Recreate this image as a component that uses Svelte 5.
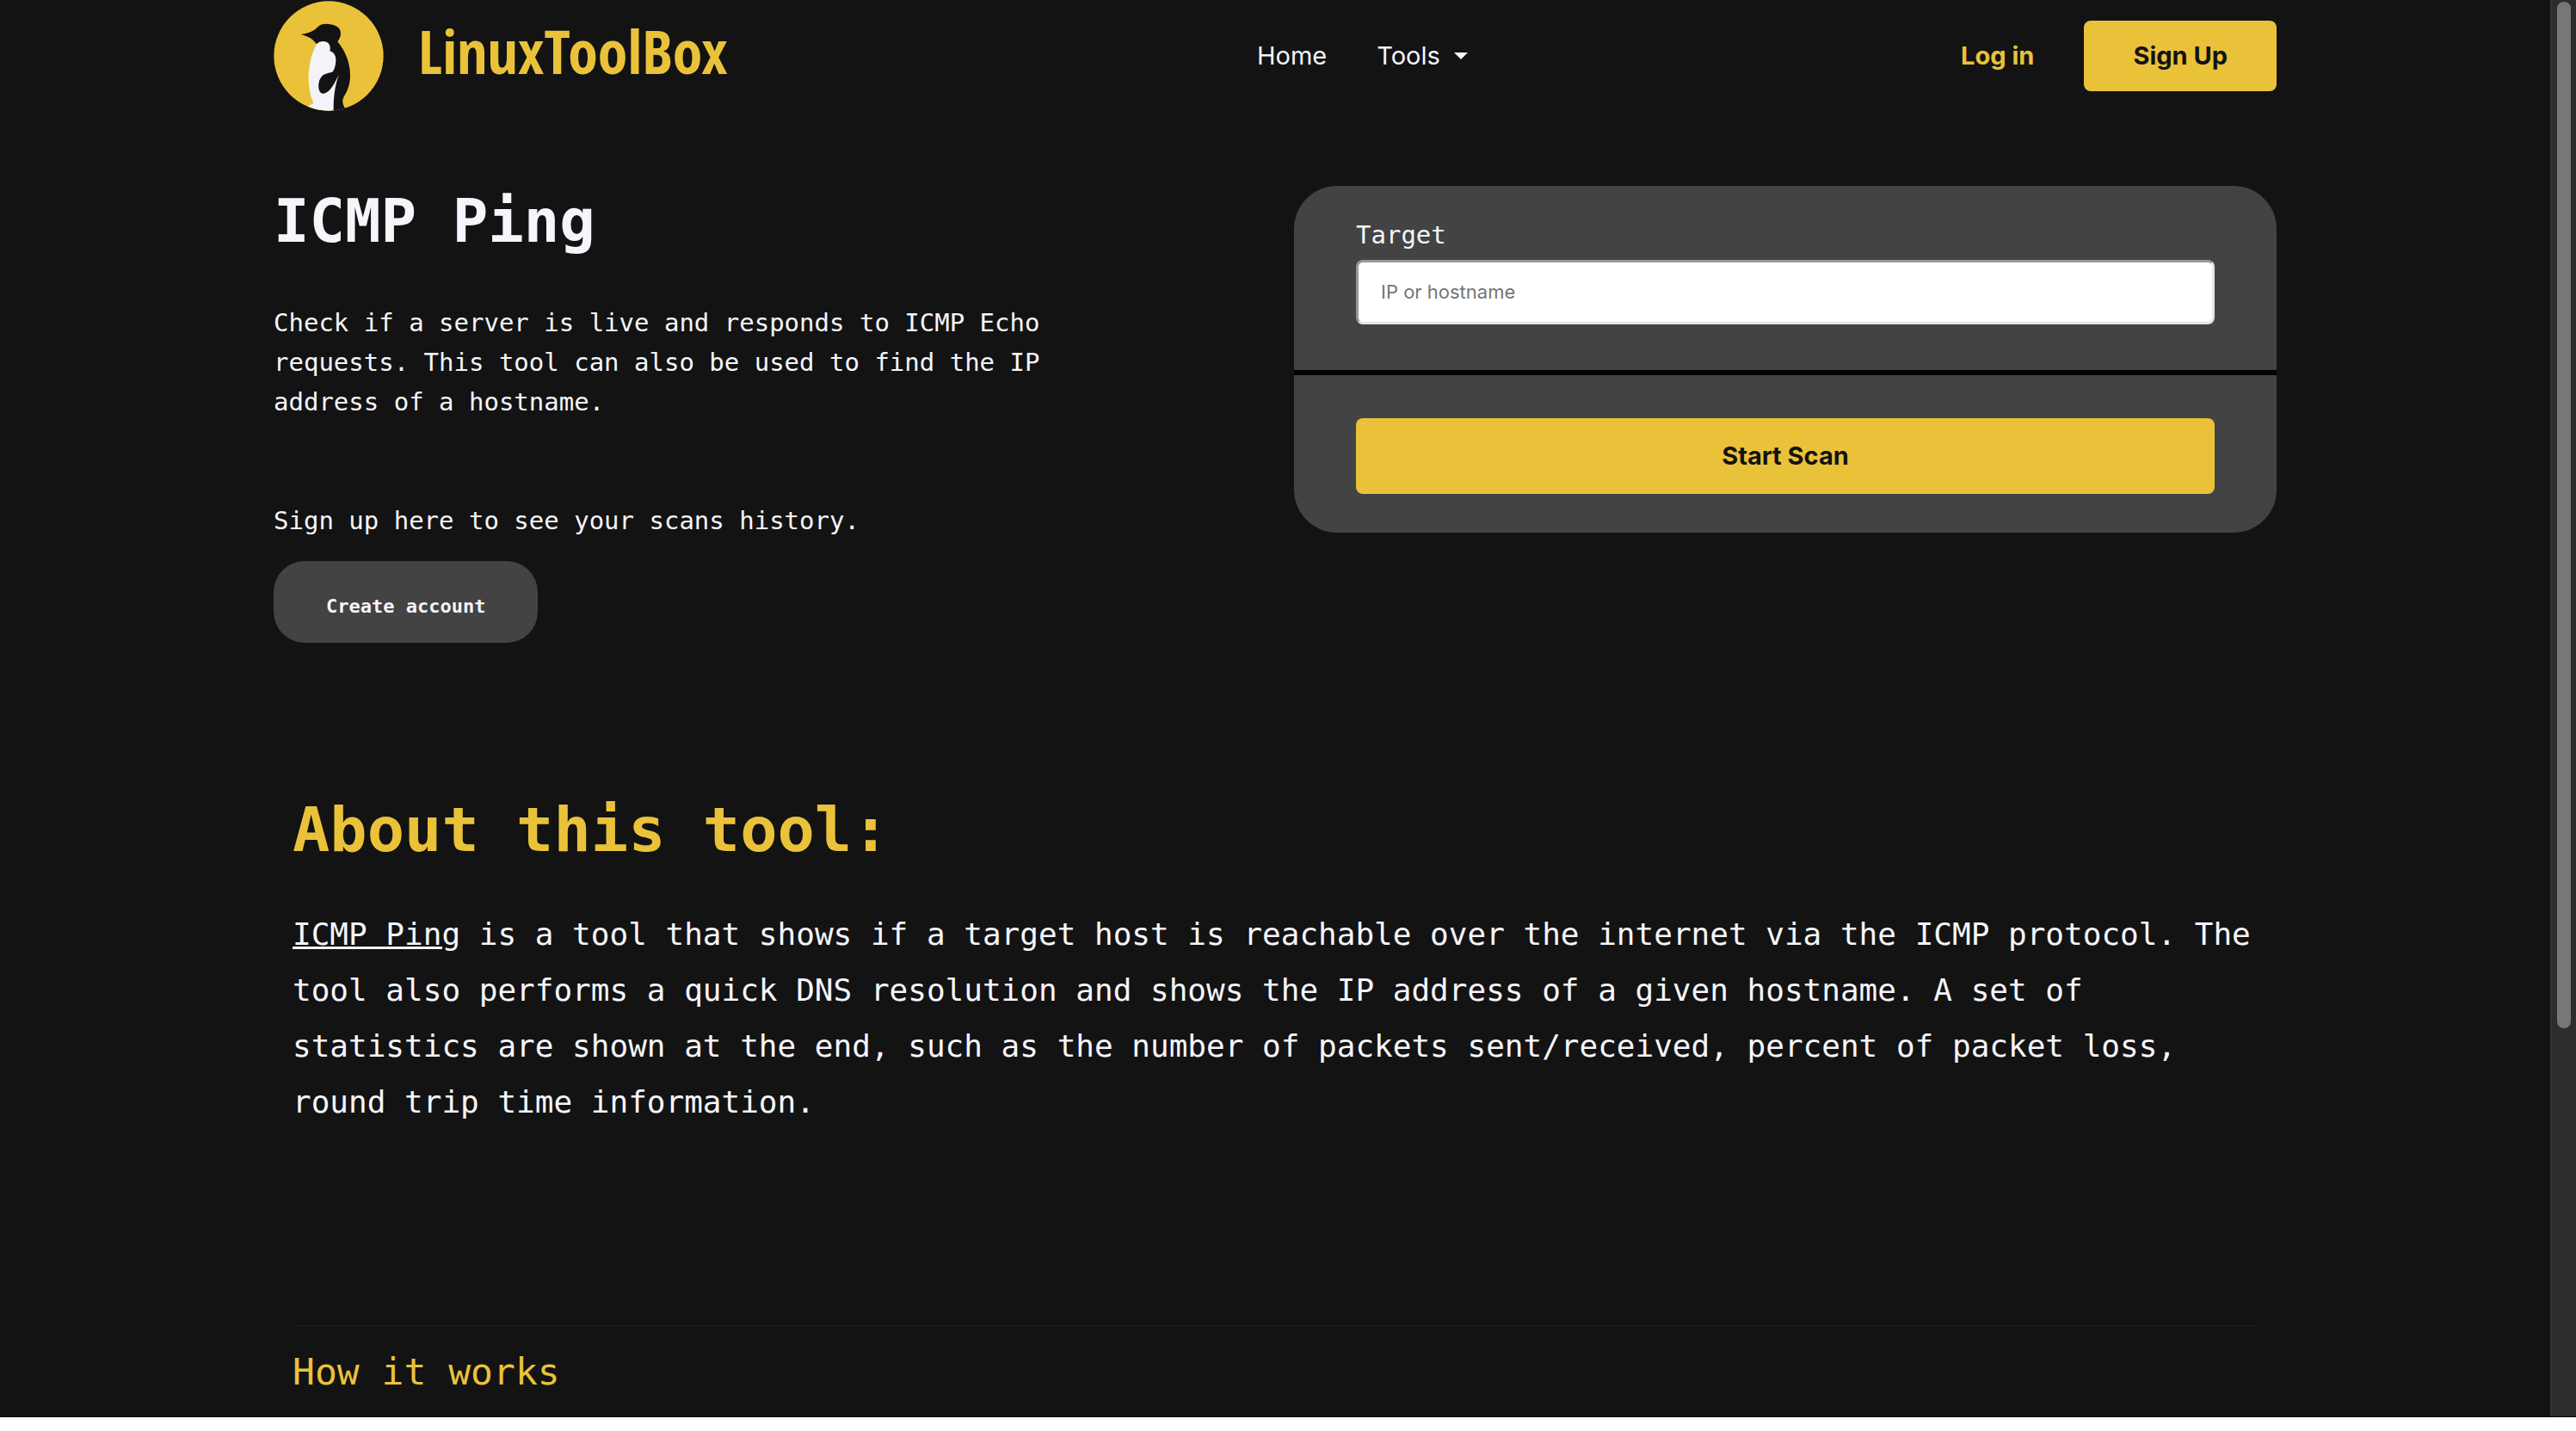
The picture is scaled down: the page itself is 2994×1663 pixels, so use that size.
<script>
  let target = $state('');
</script>

<div class="window">
  <div class="page">
    <header class="container header">
      <a class="brand" href="/" aria-label="LinuxToolBox home">
        <svg class="mark" viewBox="24 4 384 384" aria-hidden="true">
          <defs>
            <clipPath id="disc"><circle cx="216" cy="196" r="191" /></clipPath>
          </defs>
          <circle cx="216" cy="196" r="191" fill="#eac23a" />
          <g clip-path="url(#disc)">
            <path fill="#131313" d="M119 121C145 118 165 109 178 95C188 84 205 82 222 86C243 89 258 99 258 117C258 130 253 137 247 146C272 176 291 217 291 262C291 300 280 320 268 340C262 353 265 370 275 380L275 392H228L172 330L170 200L176 158C163 138 147 128 119 121Z" />
            <path fill="#f3f4f9" d="M174 155C184 144 199 143 210 148C221 154 223 168 220 179C235 183 242 197 241 213C240 232 235 246 228 252C215 256 203 256 192 267C183 277 180 291 181 305C182 321 189 329 200 327C224 321 237 288 252 262C239 293 232 340 233 392H138V376L163 361C151 332 145 300 146 262C148 222 158 183 174 155Z" />
          </g>
        </svg>
        <span class="wordmark">LinuxToolBox</span>
      </a>
      <nav class="links" aria-label="Main">
        <a href="/">Home</a>
        <button class="menu" type="button" aria-haspopup="true">Tools <span class="caret"></span></button>
      </nav>
      <div class="account">
        <a class="login" href="/login">Log in</a>
        <a class="signup" href="/signup">Sign Up</a>
      </div>
    </header>

    <main>
      <section class="container hero">
        <div class="intro">
          <h1>ICMP Ping</h1>
          <p>Check if a server is live and responds to ICMP Echo requests. This tool can also be used to find the IP address of a hostname.</p>
          <p class="history">Sign up here to see your scans history.</p>
          <a class="create" href="/signup">Create account</a>
        </div>
        <form class="card" onsubmit={(e) => e.preventDefault()}>
          <div class="field">
            <label for="target">Target</label>
            <input id="target" type="text" placeholder="IP or hostname" bind:value={target} />
          </div>
          <div class="actions">
            <button type="submit">Start Scan</button>
          </div>
        </form>
      </section>

      <section class="container about">
        <h2>About this tool:</h2>
        <p><a href="/ping">ICMP Ping</a> is a tool that shows if a target host is reachable over the internet via the ICMP protocol. The tool also performs a quick DNS resolution and shows the IP address of a given hostname. A set of statistics are shown at the end, such as the number of packets sent/received, percent of packet loss, round trip time information.</p>
        <hr />
        <h3>How it works</h3>
      </section>
    </main>
  </div>
  <div class="scrollbar" aria-hidden="true"><div class="thumb"></div></div>
</div>

<style>
  :global(body) {
    margin: 0;
    background: #fff;
  }
  .window {
    display: flex;
    background: #131313;
    border-bottom: 1px solid #000;
    color: #f5f5fb;
    font-family: "DejaVu Sans Mono", monospace;
    font-size: 29px;
    line-height: 46px;
  }
  .window * {
    box-sizing: border-box;
  }
  .page {
    flex: 1;
    min-width: 0;
    padding-bottom: 26px;
  }
  .container {
    max-width: 2328px;
    margin: 0 auto;
  }
  a {
    color: inherit;
    text-decoration: none;
  }
  button {
    border: 0;
    font: inherit;
    cursor: pointer;
  }
  h1, h2, h3, p {
    margin: 0;
  }

  .header {
    display: grid;
    grid-template-columns: 1143px 1fr auto;
    align-items: center;
    min-height: 130px;
    font-family: Inter, sans-serif;
  }
  .brand {
    display: flex;
    align-items: center;
    gap: 40px;
  }
  .mark {
    width: 128px;
    height: 128px;
  }
  .wordmark {
    padding-bottom: 12px;
    color: #eac23a;
    font-family: "Liberation Sans Narrow", "Open Sans Condensed", "Liberation Sans", sans-serif;
    font-weight: 700;
    font-size: 70px;
    line-height: 80px;
  }
  .links, .account {
    display: flex;
    align-items: center;
    gap: 58px;
  }
  .menu {
    display: flex;
    align-items: center;
    gap: 16px;
    padding: 0;
    background: none;
    color: inherit;
  }
  .caret {
    border: 8px solid transparent;
    border-top-color: currentColor;
    border-bottom: 0;
  }
  .login {
    color: #eac23a;
    font-weight: 700;
  }
  .signup {
    padding: 18px 57px;
    border-radius: 8px;
    background: #eac23a;
    color: #131313;
    font-weight: 700;
  }

  .hero {
    display: grid;
    grid-template-columns: 1fr 1142px;
    align-items: start;
    padding-top: 86px;
  }
  .intro {
    max-width: 900px;
  }
  h1 {
    margin-bottom: 54px;
    font-size: 69px;
    line-height: 82px;
  }
  .history {
    margin: 92px 0 24px;
  }
  .create {
    display: inline-block;
    padding: 30px 61px 19px;
    border-radius: 36px;
    background: #434343;
    font-size: 22px;
    font-weight: 700;
  }

  .card {
    overflow: hidden;
    border-radius: 50px;
    background: #434343;
  }
  .field {
    display: flex;
    flex-direction: column;
    gap: 6px;
    padding: 34px 72px 53px;
    border-bottom: 6px solid #000;
  }
  .field input {
    height: 75px;
    padding: 0 26px 2px;
    border: 3px solid;
    border-color: #999 #e4e4e4 #e4e4e4 #999;
    border-radius: 8px;
    background: #fff;
    font-family: Inter, sans-serif;
    font-size: 22px;
  }
  .field input::placeholder {
    color: #757575;
  }
  .actions {
    padding: 50px 72px 45px;
  }
  .actions button {
    width: 100%;
    padding: 21px;
    border-radius: 8px;
    background: #eac23a;
    color: #131313;
    font-family: Inter, sans-serif;
    font-weight: 700;
  }

  .about {
    padding: 174px 22px 0;
  }
  h2 {
    color: #eac23a;
    font-size: 72px;
    line-height: 86px;
  }
  .about p {
    margin-top: 46px;
    font-size: 36px;
    line-height: 65px;
  }
  .about p a {
    text-decoration: underline;
  }
  hr {
    margin: 227px 0 26px;
    border: 0;
    border-top: 2px solid #191919;
  }
  h3 {
    color: #eac23a;
    font-size: 43px;
    font-weight: 400;
    line-height: 52px;
  }

  .scrollbar {
    width: 30px;
    padding: 2px 6px 0;
    border-left: 2px solid #333;
    background: #2d2d2d;
  }
  .thumb {
    height: 1193px;
    width: 16px;
    border-radius: 8px;
    background: #777;
  }
</style>
